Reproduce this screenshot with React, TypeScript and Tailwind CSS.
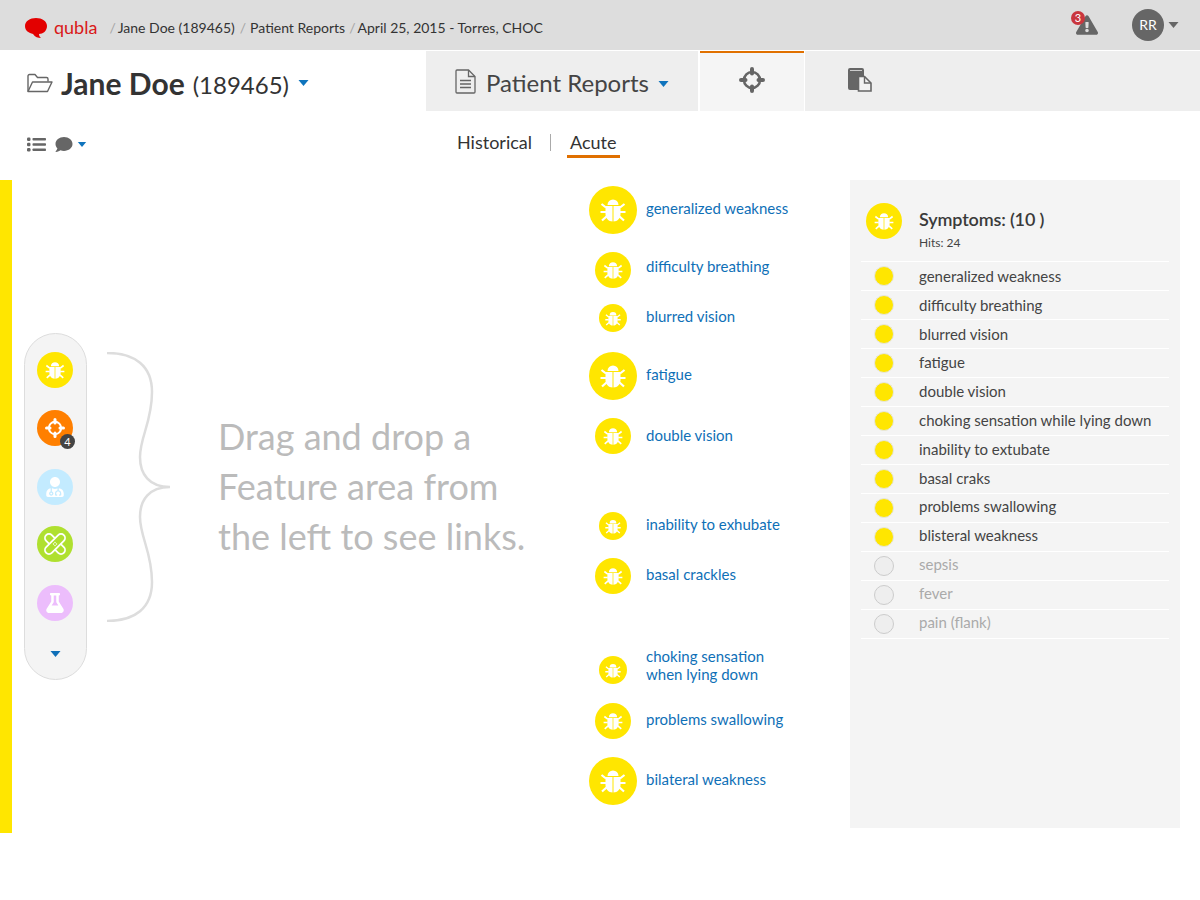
import { FaComment, FaExclamationTriangle, FaFlask, FaUserMd } from 'react-icons/fa';

const LINKS = [
  { label: ['generalized weakness'], size: 'h-12 w-12', icon: 'w-[26px] h-[24px]', mt: 'mt-[6px]', shift: 'mb-[4px]' },
  { label: ['difficulty breathing'], size: 'h-9 w-9', icon: 'w-[20px] h-[18px]', mt: 'mt-[18px]', shift: 'mb-[8px]' },
  { label: ['blurred vision'], size: 'h-7 w-7', icon: 'w-[16px] h-[15px]', mt: 'mt-[16px]', shift: 'mb-[4px]' },
  { label: ['fatigue'], size: 'h-12 w-12', icon: 'w-[26px] h-[24px]', mt: 'mt-[20px]', shift: 'mb-[4px]' },
  { label: ['double vision'], size: 'h-9 w-9', icon: 'w-[20px] h-[18px]', mt: 'mt-[18px]', shift: 'mb-[2px]' },
  { label: ['inability to exhubate'], size: 'h-7 w-7', icon: 'w-[16px] h-[15px]', mt: 'mt-[58px]', shift: 'mb-[4px]' },
  { label: ['basal crackles'], size: 'h-9 w-9', icon: 'w-[20px] h-[18px]', mt: 'mt-[18px]', shift: 'mb-[4px]' },
  { label: ['choking sensation', 'when lying down'], size: 'h-7 w-7', icon: 'w-[16px] h-[15px]', mt: 'mt-[62px] h-7', shift: 'mb-[10px]' },
  { label: ['problems swallowing'], size: 'h-9 w-9', icon: 'w-[20px] h-[18px]', mt: 'mt-[19px]', shift: 'mb-[4px]' },
  { label: ['bilateral weakness'], size: 'h-12 w-12', icon: 'w-[26px] h-[24px]', mt: 'mt-[18px]', shift: 'mb-[4px]' },
];

const SYMPTOMS = [
  { label: 'generalized weakness', shift: '' },
  { label: 'difficulty breathing', shift: '' },
  { label: 'blurred vision', shift: '' },
  { label: 'fatigue', shift: 'mb-[2px]' },
  { label: 'double vision', shift: 'mb-[2px]' },
  { label: 'choking sensation while lying down', shift: 'mb-[2px]' },
  { label: 'inability to extubate', shift: 'mb-[2px]' },
  { label: 'basal craks', shift: 'mb-[2px]' },
  { label: 'problems swallowing', shift: 'mb-[4px]' },
  { label: 'blisteral weakness', shift: 'mb-[4px]' },
];

const INACTIVE = ['sepsis', 'fever', 'pain (flank)'];

function Caret({ className }: { className: string }) {
  return (
    <svg viewBox="0 0 10 6" className={className}>
      <path d="M0 0h10L5 6z" fill="currentColor" />
    </svg>
  );
}

function Bug({ className }: { className: string }) {
  return (
    <svg viewBox="0 0 26 24" className={className} fill="currentColor">
      <path d="M7.500 7a5.500 5.500 0 0 1 11 0z" />
      <path d="M5.500 8h7v15.500C8.500 23.500 5.500 20 5.500 16z" />
      <path d="M13.500 8h7v8c0 4-3 7.500-7 7.500z" />
      <path d="M6 9.500L1.500 6M6 14H0.500M6.500 18.500L2 22.500M20 9.500L24.500 6M20 14h5.500M19.500 18.500L24 22.500" stroke="currentColor" strokeWidth="2.200" fill="none" />
    </svg>
  );
}

function Crosshair({ className }: { className: string }) {
  return (
    <svg viewBox="0 0 26 26" className={className} fill="none" stroke="currentColor">
      <circle cx="13" cy="13" r="8" strokeWidth="2.600" />
      <path d="M13 2v4.500M13 19.500V24M2 13h4.500M19.500 13H24" strokeWidth="4" strokeLinecap="round" />
    </svg>
  );
}

function Bandages({ className }: { className: string }) {
  return (
    <svg viewBox="0 0 26 26" className={className} fill="none" stroke="currentColor" strokeWidth="1.800">
      <rect x="0.500" y="9" width="25" height="8" rx="4" transform="rotate(45 13 13)" />
      <rect x="0.500" y="9" width="25" height="8" rx="4" transform="rotate(-45 13 13)" fill="#afe02f" />
      <path d="M11.500 13h.01M14.500 13h.01M13 11.500v.01M13 14.500v.01" strokeLinecap="round" strokeWidth="1.400" />
    </svg>
  );
}

function Pages({ className }: { className: string }) {
  return (
    <svg viewBox="0 0 24 24" className={className}>
      <path d="M0 2a2 2 0 0 1 2-2h12a2 2 0 0 1 2 2v6h-4v14H2a2 2 0 0 1-2-2z" fill="currentColor" />
      <path d="M2 2.500h12" stroke="#cccccc" strokeWidth="1" />
      <path d="M10.500 8.500h6l6.500 6.500v8h-12.500z" fill="#f2f2f2" stroke="currentColor" strokeWidth="1.600" />
      <path d="M16.500 8.500V15H23" fill="none" stroke="currentColor" strokeWidth="1.400" />
    </svg>
  );
}

function FileLines({ className }: { className: string }) {
  return (
    <svg viewBox="0 0 21 25" className={className} fill="none" stroke="currentColor" strokeWidth="1.300">
      <path d="M1 2a1 1 0 0 1 1-1h11.500L20 7.500V23a1 1 0 0 1-1 1H2a1 1 0 0 1-1-1z" />
      <path d="M13.500 1v6.500H20M5 11.500h11M5 15h11M5 18.500h11" />
    </svg>
  );
}

function FolderOpen({ className }: { className: string }) {
  return (
    <svg viewBox="0 0 26 20" className={className} fill="none" stroke="currentColor" strokeWidth="1.400" strokeLinejoin="round">
      <path d="M1 18.500V3a1.500 1.500 0 0 1 1.500-1.500h5.500l2.500 3h9a1.500 1.500 0 0 1 1.500 1.500v2.500" />
      <path d="M1 18.500l4.500-9.500H25l-4.500 9.500z" />
    </svg>
  );
}

function ListBullets({ className }: { className: string }) {
  return (
    <svg viewBox="0 0 19 15" className={className} fill="currentColor">
      <rect x="0" y="0.500" width="3.500" height="3.500" rx="1.200" />
      <rect x="0" y="5.700" width="3.500" height="3.500" rx="1.200" />
      <rect x="0" y="11" width="3.500" height="3.500" rx="1.200" />
      <rect x="5.500" y="1" width="13.500" height="2.600" rx="0.800" />
      <rect x="5.500" y="6.200" width="13.500" height="2.600" rx="0.800" />
      <rect x="5.500" y="11.400" width="13.500" height="2.600" rx="0.800" />
    </svg>
  );
}

function BugBadge({ size, icon }: { size: string; icon: string }) {
  return (
    <div className={`${size} rounded-full bg-[#ffe600] flex items-center justify-center text-white shrink-0`}>
      <Bug className={icon} />
    </div>
  );
}

function Rail() {
  return (
    <div className="w-[63px] h-[347px] mt-[153px] rounded-full border border-[#dddddd] bg-[#f4f4f4] flex flex-col items-center pt-[18px] pr-px">
      <div className="w-9 h-9 rounded-full bg-[#ffe600] flex items-center justify-center text-white">
        <Bug className="w-[20px] h-[18px]" />
      </div>
      <div className="relative w-9 h-9 mt-[22px] rounded-full bg-[#ff7f00] flex items-center justify-center text-white">
        <Crosshair className="w-5 h-5" />
        <span className="absolute -right-[2px] -bottom-[3px] w-[15px] h-[15px] rounded-full bg-[#444444] text-white text-[11px] leading-[15px] text-center">4</span>
      </div>
      <div className="w-9 h-9 mt-[23px] rounded-full bg-[#c3ebff] flex items-center justify-center text-white">
        <FaUserMd className="w-5 h-5" />
      </div>
      <div className="w-9 h-9 mt-[21px] rounded-full bg-[#afe02f] flex items-center justify-center text-white">
        <Bandages className="w-[26px] h-[26px]" />
      </div>
      <div className="w-9 h-9 mt-[23px] rounded-full bg-[#ecbdfc] flex items-center justify-center text-white">
        <FaFlask className="w-5 h-5" />
      </div>
      <Caret className="w-[11px] h-[6px] mt-[30px] text-[#0f6fb8]" />
    </div>
  );
}

export default function App() {
  return (
    <div className="min-h-[900px] bg-white text-[#333333] font-['Lato','Liberation_Sans',sans-serif]">
      {/* top bar */}
      <div className="h-[50px] bg-[#dddddd] flex items-center pl-[24px] pr-[21px] text-sm">
        <div className="flex items-center mt-[6px]">
          <svg viewBox="0 0 24 22" className="w-[24px] h-[22px] text-[#e30000]">
            <path d="M12 1c6 0 11 3 11 8s-4 8-8 8c0 2 1 3 2 4-3 0-6-1-8-4-4-1-8-3-8-8s5-8 11-8z" fill="currentColor" />
          </svg>
          <span className="ml-[6px] text-[18px] text-[#d91818]">qubla</span>
          <span className="ml-[12px] text-[#a5a5a5]">/</span>
          <span className="ml-[2px]">Jane Doe (189465)</span>
          <span className="ml-[5px] text-[#a5a5a5]">/</span>
          <span className="ml-[4px]">Patient Reports</span>
          <span className="ml-[4px] text-[#a5a5a5]">/</span>
          <span className="ml-[2px]">April 25, 2015 - Torres, CHOC</span>
        </div>
        <div className="relative ml-auto text-[#666666]">
          <FaExclamationTriangle className="w-[22px] h-[20px]" />
          <span className="absolute -left-[5px] -top-[4px] w-[14px] h-[14px] rounded-full bg-[#c9363e] text-white text-[11px] leading-[14px] text-center">3</span>
        </div>
        <div className="ml-[34px] w-[32px] h-[32px] rounded-full bg-[#666666] text-white flex items-center justify-center text-sm">RR</div>
        <Caret className="ml-[4px] w-[11px] h-[6px] text-[#666666]" />
      </div>

      {/* patient header and tabs */}
      <div className="mt-px h-[60px] flex">
        <div className="w-[426px] pl-[27px] flex items-center pt-[4px]">
          <FolderOpen className="w-[26px] h-[20px] text-[#666666]" />
          <span className="ml-[8px] text-[30px] font-bold">Jane Doe</span>
          <span className="ml-[8px] text-[24px] mt-[3px]">(189465)</span>
          <Caret className="ml-[9px] w-[11px] h-[6px] text-[#0f74bd]" />
        </div>
        <div className="w-[272px] bg-[#eeeeee] flex items-center pl-[29px]">
          <FileLines className="w-[21px] h-[25px] text-[#666666]" />
          <span className="ml-[10px] text-[24px] text-[#444444] mt-[4px]">Patient Reports</span>
          <Caret className="ml-[9px] mt-[6px] w-[11px] h-[6px] text-[#0f74bd]" />
        </div>
        <div className="w-[2px] bg-white" />
        <div className="w-[104px] bg-[#f5f5f5] border-t-2 border-[#e07000] flex items-center justify-center pb-[4px]">
          <Crosshair className="w-[26px] h-[26px] text-[#666666]" />
        </div>
        <div className="w-px bg-white" />
        <div className="flex-1 bg-[#eeeeee] pl-[43px] flex items-center pb-[2px]">
          <Pages className="w-[24px] h-[24px] text-[#666666]" />
        </div>
      </div>

      {/* sub row */}
      <div className="h-[69px] flex items-center">
        <div className="w-[457px] pl-[27px] flex items-center text-[#666666] pb-[2px]">
          <ListBullets className="w-[19px] h-[15px]" />
          <FaComment className="ml-[9px] w-[18px] h-[17px]" />
          <Caret className="ml-[4px] w-[10px] h-[5px] text-[#0f74bd]" />
        </div>
        <div className="flex items-center mb-[6px]">
          <span className="text-[18px]">Historical</span>
          <div className="ml-[18px] w-px h-[17px] bg-[#aaaaaa]" />
          <span className="ml-[16px] text-[18px] border-b-[3px] border-[#e07000] px-[3px] leading-[25px] mt-[2px]">Acute</span>
        </div>
      </div>

      {/* main area */}
      <div className="h-[653px] flex">
        <div className="w-[12px] bg-[#ffe600]" />
        <div className="w-[577px] flex pl-[12px]">
          <Rail />
          <svg viewBox="0 0 63 270" className="w-[63px] h-[270px] mt-[172px] ml-[20px] text-[#dddddd]" fill="none" stroke="currentColor" strokeWidth="2.500">
            <path d="M0 1C28 1 45 14 45 40C45 70 33 85 33 105C33 122 42 135 63 135C42 135 33 148 33 165C33 185 45 200 45 230C45 256 28 269 0 269" />
          </svg>
          <p className="ml-[48px] mt-[231px] text-[36px] leading-[50px] text-[#bbbbbb] whitespace-nowrap">
            Drag and drop a<br />Feature area from<br />the left to see links.
          </p>
        </div>

        <div className="w-[261px] flex flex-col">
          {LINKS.map((link) => (
            <div key={link.label[0]} className={`${link.mt} flex items-center`}>
              <div className="w-12 flex justify-center">
                <BugBadge size={link.size} icon={link.icon} />
              </div>
              <div className={`${link.shift} ml-[9px] text-[15px] leading-[18px] text-[#0f70b7]`}>
                {link.label.map((line) => (
                  <div key={line}>{line}</div>
                ))}
              </div>
            </div>
          ))}
        </div>

        <div className="w-[330px] h-[648px] bg-[#f4f4f4] px-[11px] pt-[23px]">
          <div className="h-[58px] flex pl-[5px]">
            <BugBadge size="h-9 w-9" icon="w-[20px] h-[18px]" />
            <div className="ml-[17px]">
              <div className="text-[18px] font-semibold tracking-[-0.15px] leading-[24px] mt-[4px] text-[#3a3a3a]">Symptoms: (10 )</div>
              <div className="text-xs mt-[4px] text-[#444444]">Hits: 24</div>
            </div>
          </div>
          <div className="border-t border-white">
            {SYMPTOMS.map((s) => (
              <div key={s.label} className="h-[29px] border-b border-white flex items-center">
                <div className="ml-[13px] w-[20px] h-[20px] rounded-full bg-[#ffe600] border border-[#e6e6e0]" />
                <span className={`${s.shift} ml-[25px] text-[15px] text-[#444444]`}>{s.label}</span>
              </div>
            ))}
            {INACTIVE.map((s) => (
              <div key={s} className="h-[29px] border-b border-white flex items-center">
                <div className="ml-[13px] w-[20px] h-[20px] rounded-full bg-[#eeeeee] border border-[#cccccc]" />
                <span className="ml-[25px] mb-[3px] text-[15px] text-[#aaaaaa]">{s}</span>
              </div>
            ))}
          </div>
        </div>
      </div>
    </div>
  );
}
